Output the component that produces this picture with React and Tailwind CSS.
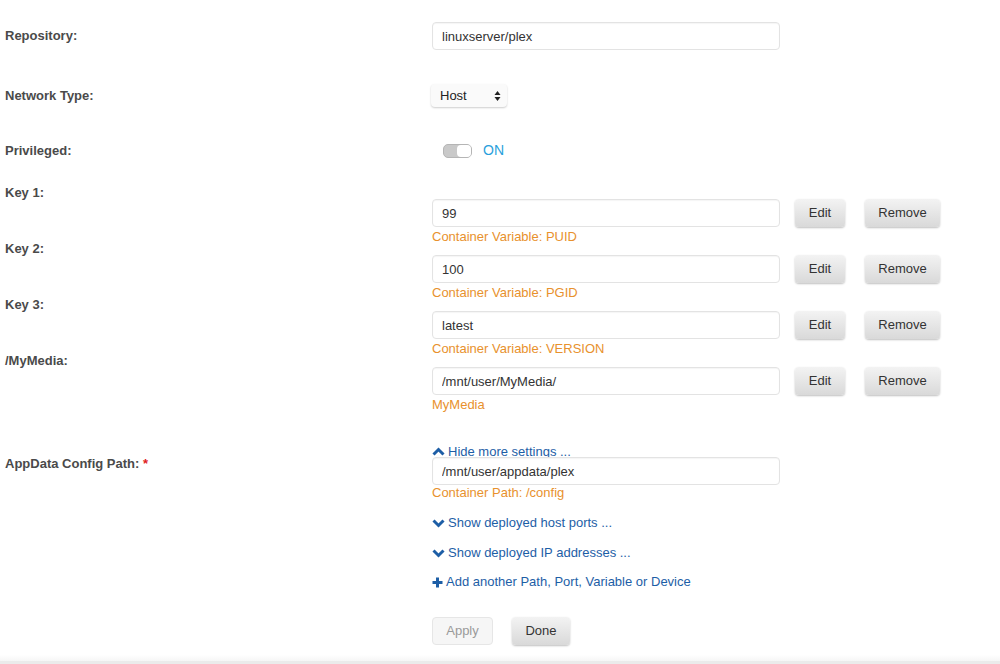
import React from 'react';

const font = { fontFamily: '"Liberation Sans", Arial, sans-serif' };

const TextBox = ({ value }) => (
  <input
    readOnly
    value={value}
    className="relative block w-[348px] h-[28px] rounded-[4px] border border-[#e3e3e3] bg-white pl-[9px] text-[13px] text-[#333] shadow-[inset_0_1px_1px_rgba(0,0,0,0.04)] outline-none"
  />
);

const GrayButton = ({ children, className = '' }) => (
  <button
    className={`h-[28px] rounded-[4px] bg-gradient-to-b from-[#f3f3f3] to-[#d9d9d9] text-[13px] text-[#333] shadow-[0_1px_2px_rgba(0,0,0,0.25)] ${className}`}
  >
    {children}
  </button>
);

const Label = ({ children }) => (
  <div className="pl-[5px] text-[13px] font-bold leading-[16px] text-[#4a4a4a]">{children}</div>
);

// font-awesome style glyphs
const ChevronIcon = ({ up }) => (
  <svg width="13" height="10" viewBox="0 0 13 10" className="mr-[3px]">
    <path
      d={up ? 'M1.5 7.5 L6.5 2.5 L11.5 7.5' : 'M1.5 2.5 L6.5 7.5 L11.5 2.5'}
      fill="none"
      stroke="#1d5ea6"
      strokeWidth="3"
      strokeLinejoin="miter"
    />
  </svg>
);

const PlusIcon = () => (
  <svg width="11" height="11" viewBox="0 0 11 11" className="mr-[3px]">
    <path d="M4 0.5 H7 V4 H10.5 V7 H7 V10.5 H4 V7 H0.5 V4 H4 Z" fill="#1d5ea6" />
  </svg>
);

const KeyRow = ({ label, value, hint }) => (
  <div className="grid h-[56px] grid-cols-[432px_1fr]">
    <Label>{label}</Label>
    <div className="pt-[14px]">
      <div className="flex items-center">
        <TextBox value={value} />
        <GrayButton className="ml-[15px] w-[50px]">Edit</GrayButton>
        <GrayButton className="ml-[20px] w-[75px]">Remove</GrayButton>
      </div>
      <div className="mt-[2px] text-[13px] leading-[16px] text-[#e8912d]">{hint}</div>
    </div>
  </div>
);

const LinkLine = ({ icon, children, className = '' }) => (
  <div className={`flex items-center text-[13px] leading-[16px] text-[#1d5ea6] ${className}`}>
    {icon}
    <span>{children}</span>
  </div>
);

export default function App() {
  return (
    <div className="flex min-h-[664px] flex-col bg-white" style={font}>
      <div className="flex-1">
        {/* Repository */}
        <div className="mt-[22px] grid h-[28px] grid-cols-[432px_1fr] items-center">
          <Label>Repository:</Label>
          <TextBox value="linuxserver/plex" />
        </div>

        {/* Network type */}
        <div className="mt-[34px] grid h-[23px] grid-cols-[432px_1fr] items-center">
          <Label>Network Type:</Label>
          <div className="-ml-[1px] flex h-[23px] w-[76px] items-center justify-between rounded-[4px] bg-[#fafafa] pl-[9px] pr-[6px] text-[13px] text-[#222] shadow-[0_1px_2px_rgba(0,0,0,0.2)]">
            <span>Host</span>
            <svg width="7" height="12" viewBox="0 0 7 12">
              <path d="M3.5 1 L6.5 5 L0.5 5 Z" fill="#222" />
              <path d="M3.5 11 L6.5 7 L0.5 7 Z" fill="#222" />
            </svg>
          </div>
        </div>

        {/* Privileged */}
        <div className="mt-[33px] grid h-[14px] grid-cols-[432px_1fr] items-center">
          <Label>Privileged:</Label>
          <div className="flex items-center">
            <div className="ml-[11px] flex h-[14px] w-[29px] items-center justify-end rounded-[5px] border border-[#b5b5b5] bg-[#c9c9c9]">
              <div className="h-[12px] w-[14px] rounded-[4px] bg-white" />
            </div>
            <span className="ml-[11px] text-[14px] text-[#2a9fdc]">ON</span>
          </div>
        </div>

        {/* Keys */}
        <div className="mt-[31px]">
          <KeyRow label="Key 1:" value="99" hint="Container Variable: PUID" />
          <KeyRow label="Key 2:" value="100" hint="Container Variable: PGID" />
          <KeyRow label="Key 3:" value="latest" hint="Container Variable: VERSION" />
          <KeyRow label="/MyMedia:" value="/mnt/user/MyMedia/" hint="MyMedia" />
        </div>

        {/* Hide more settings */}
        <div className="mt-[35px] pl-[432px]">
          <LinkLine icon={<ChevronIcon up />}>Hide more settings ...</LinkLine>
        </div>

        {/* AppData */}
        <div className="-mt-[4px] grid grid-cols-[432px_1fr]">
          <Label>
            AppData Config Path: <span className="text-[#e01b1b]">*</span>
          </Label>
          <div className="pt-[1px]">
            <TextBox value="/mnt/user/appdata/plex" />
            <div className="text-[13px] leading-[16px] text-[#e8912d]">Container Path: /config</div>
          </div>
        </div>

        <div className="pl-[432px]">
          <LinkLine className="mt-[14px]" icon={<ChevronIcon />}>
            Show deployed host ports ...
          </LinkLine>
          <LinkLine className="mt-[14px]" icon={<ChevronIcon />}>
            Show deployed IP addresses ...
          </LinkLine>
          <LinkLine className="mt-[13px]" icon={<PlusIcon />}>
            Add another Path, Port, Variable or Device
          </LinkLine>

          <div className="mt-[27px] flex items-center">
            <button className="h-[28px] w-[61px] rounded-[4px] border border-[#e6e6e6] bg-[#f6f6f6] text-[13px] text-[#9a9a9a]">
              Apply
            </button>
            <GrayButton className="ml-[19px] w-[58px]">Done</GrayButton>
          </div>
        </div>
      </div>
      <div className="h-[6px] bg-gradient-to-b from-[#ffffff] to-[#f6f6f6]" />
      <div className="h-[3px] bg-[#ebebeb]" />
    </div>
  );
}
